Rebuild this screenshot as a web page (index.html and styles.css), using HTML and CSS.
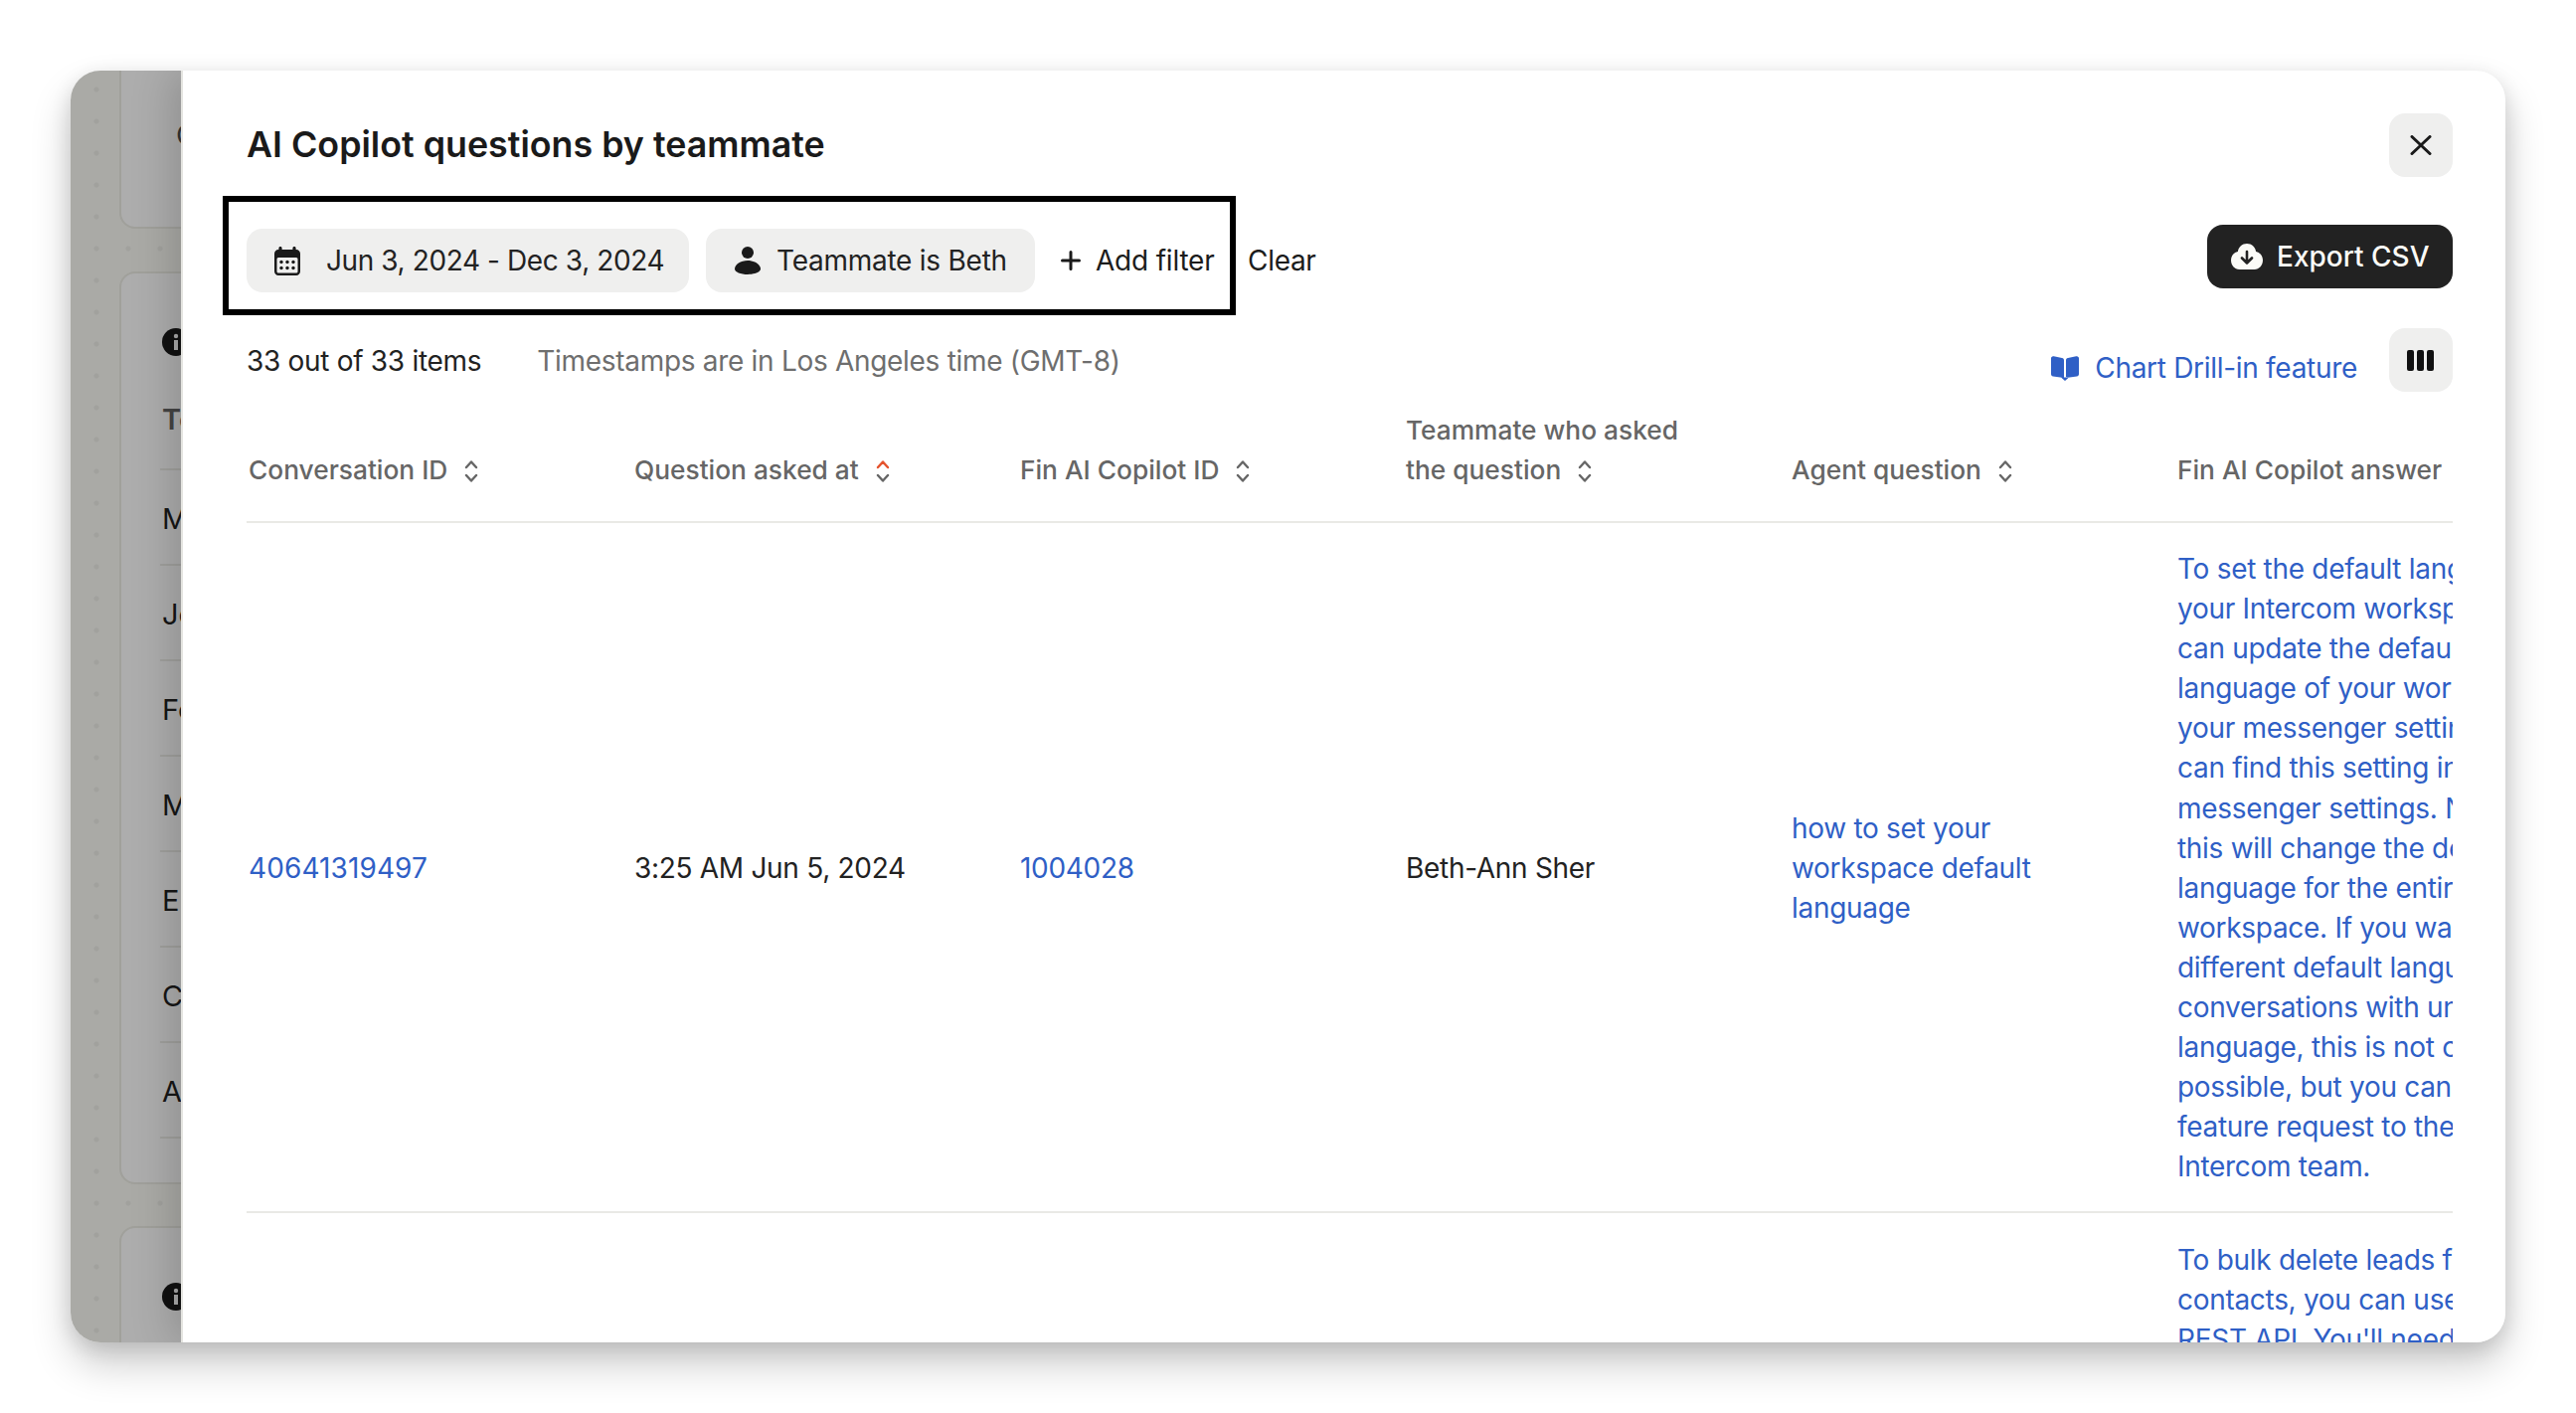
FILE: index.html
```html
<!DOCTYPE html>
<html lang="en">
<head>
<meta charset="utf-8">
<title>AI Copilot questions by teammate</title>
<link rel="stylesheet" href="styles.css">
</head>
<body>
<div class="window">
  <div class="backdrop">
    <div class="card card-top"><span class="card-cut">C</span></div>
    <div class="card card-main">
      <svg class="info" viewBox="0 0 28 28"><circle cx="14" cy="14" r="14" fill="#111"/><circle cx="14" cy="8" r="2.2" fill="#aaa"/><rect x="12" y="12" width="4" height="10" fill="#aaa"/></svg>
      <div class="card-row card-head">To</div>
      <div class="card-row">Mo</div>
      <div class="card-row">Je</div>
      <div class="card-row">Fo</div>
      <div class="card-row">Mi</div>
      <div class="card-row">Er</div>
      <div class="card-row">Ca</div>
      <div class="card-row">Al</div>
    </div>
    <div class="card card-bottom">
      <svg class="info" viewBox="0 0 28 28"><circle cx="14" cy="14" r="14" fill="#111"/><circle cx="14" cy="8" r="2.2" fill="#aaa"/><rect x="12" y="12" width="4" height="10" fill="#aaa"/></svg>
    </div>
  </div>

  <div class="modal">
    <header class="modal-head">
      <h1 class="title">AI Copilot questions by teammate</h1>
      <button class="icon-btn" aria-label="Close">
        <svg class="close-icon" viewBox="0 0 22 20"><path d="M2 1.500 20 18.500M20 1.500 2 18.500" fill="none" stroke="#1a1a1a" stroke-width="3" stroke-linecap="round"/></svg>
      </button>
    </header>

    <div class="toolbar">
      <div class="filter-box">
        <div class="chip chip-date">
          <svg class="cal-icon" viewBox="0 0 26 29"><path fill="#1a1a1a" fill-rule="evenodd" d="M6 0c1 0 1.600.7 1.600 1.600V3h10.800V1.600C18.400.7 19 0 20 0s1.600.7 1.600 1.600V3H22c2.200 0 4 1.800 4 4v18c0 2.200-1.800 4-4 4H4c-2.200 0-4-1.800-4-4V7c0-2.200 1.800-4 4-4h.4V1.600C4.400.7 5 0 6 0ZM4 11a1.500 1.500 0 0 0-1.500 1.500V25A1.500 1.500 0 0 0 4 26.500h18a1.500 1.500 0 0 0 1.500-1.500V12.500A1.500 1.500 0 0 0 22 11H4Z"/><g fill="#1a1a1a"><circle cx="7" cy="15.500" r="1.700"/><circle cx="13" cy="15.500" r="1.700"/><circle cx="19" cy="15.500" r="1.700"/><circle cx="7" cy="21.500" r="1.700"/><circle cx="13" cy="21.500" r="1.700"/><circle cx="19" cy="21.500" r="1.700"/></g></svg>
          <span>Jun 3, 2024 - Dec 3, 2024</span>
        </div>
        <div class="chip chip-person">
          <svg class="person-icon" viewBox="0 0 26 28"><circle cx="13" cy="6" r="6" fill="#1a1a1a"/><path fill="#1a1a1a" d="M13 14c7 0 13 4 13 8.500 0 3-6 5.500-13 5.500S0 25.500 0 22.500C0 18 6 14 13 14Z"/></svg>
          <span>Teammate is Beth</span>
        </div>
        <div class="add-filter">
          <svg class="plus-icon" viewBox="0 0 20 20"><path d="M10 1.500v17M1.500 10h17" fill="none" stroke="#1a1a1a" stroke-width="3" stroke-linecap="round"/></svg>
          <span>Add filter</span>
        </div>
      </div>
      <span class="clear">Clear</span>
      <button class="export">
        <svg class="cloud-icon" viewBox="0 0 32 26"><path fill="#fbfbf7" d="M16 0c4.700 0 8.500 3.500 9.100 8C29 8.900 32 12.300 32 16.500 32 21.700 28.500 26 23.500 26h-15C3.500 26 0 21.700 0 16.500 0 12.300 3 8.900 6.900 8 7.500 3.500 11.300 0 16 0Z"/><path d="M16 8v11M11 14.500l5 5 5-5" fill="none" stroke="#222" stroke-width="2.600" stroke-linecap="round" stroke-linejoin="round"/></svg>
        <span>Export CSV</span>
      </button>
    </div>

    <div class="meta">
      <span class="count">33 out of 33 items</span>
      <span class="zone">Timestamps are in Los Angeles time (GMT-8)</span>
      <a class="doc-link">
        <svg class="book-icon" viewBox="0 0 28 25"><path fill="#2f5fc6" d="M0 2.500C0 1 1.200 0 2.700 .3L11 2c1.300.3 2 1.200 2 2.500V22L2 20.500C.8 20.300 0 19.400 0 18.200ZM28 2.500C28 1 26.800 0 25.300 .3L17 2c-1.300.3-2 1.200-2 2.500V22l11-1.500c1.200-.2 2-1.100 2-2.300ZM10 21.500l8 0-4 3.500Z"/></svg>
        <span>Chart Drill-in feature</span>
      </a>
      <button class="icon-btn columns-btn" aria-label="Columns">
        <svg class="cols-icon" viewBox="0 0 27 21"><g fill="#111"><rect width="7" height="21" rx="2"/><rect x="10" width="7" height="21" rx="2"/><rect x="20" width="7" height="21" rx="2"/></g></svg>
      </button>
    </div>

    <div class="table-wrap">
      <table class="data">
        <thead>
          <tr>
            <th><span class="th-in">Conversation ID <svg class="sort" viewBox="0 0 16 22"><path d="M3 7 8 1.500 13 7M3 15l5 5.500 5-5.500"/></svg></span></th>
            <th><span class="th-in">Question asked at <svg class="sort" viewBox="0 0 16 22"><path class="asc" d="M3 7 8 1.500 13 7"/><path d="M3 15l5 5.500 5-5.500"/></svg></span></th>
            <th><span class="th-in">Fin AI Copilot ID <svg class="sort" viewBox="0 0 16 22"><path d="M3 7 8 1.500 13 7M3 15l5 5.500 5-5.500"/></svg></span></th>
            <th><span class="th-in">Teammate who asked<br>the question <svg class="sort" viewBox="0 0 16 22"><path d="M3 7 8 1.500 13 7M3 15l5 5.500 5-5.500"/></svg></span></th>
            <th><span class="th-in">Agent question <svg class="sort" viewBox="0 0 16 22"><path d="M3 7 8 1.500 13 7M3 15l5 5.500 5-5.500"/></svg></span></th>
            <th><span class="th-in">Fin AI Copilot answer</span></th>
          </tr>
        </thead>
        <tbody>
          <tr>
            <td class="link conv-id">40641319497</td>
            <td>3:25 AM Jun 5, 2024</td>
            <td class="link">1004028</td>
            <td>Beth-Ann Sher</td>
            <td class="link">how to set your<br>workspace default<br>language</td>
            <td class="link answer">To set the default language for<br>your Intercom workspace, you<br>can update the default<br>language of your workspace in<br>your messenger settings. You<br>can find this setting in<br>messenger settings. Note that<br>this will change the default<br>language for the entire<br>workspace. If you want a<br>different default language for<br>conversations with unknown<br>language, this is not currently<br>possible, but you can submit a<br>feature request to the<br>Intercom team.</td>
          </tr>
          <tr>
            <td></td><td></td><td></td><td></td><td></td>
            <td class="link answer">To bulk delete leads from your<br>contacts, you can use the<br>REST API. You'll need to</td>
          </tr>
        </tbody>
      </table>
    </div>
  </div>
</div>
</body>
</html>
```

FILE: styles.css
```css
* { box-sizing: border-box; }

html, body { margin: 0; background: #fff; }

body {
  padding: 71px 71px 71px;
  font-family: Inter, "Liberation Sans", sans-serif;
  color: #222;
}

.window {
  width: 2449px;
  height: 1279px;
  display: flex;
  border-radius: 30px;
  overflow: hidden;
  background: #fff;
  box-shadow: 0 22px 40px rgba(0, 0, 0, .2), 0 6px 20px rgba(0, 0, 0, .12);
}

/* dimmed page behind the modal */
.backdrop {
  width: 111px;
  flex: none;
  overflow: hidden;
  padding-left: 49px;
  background-color: #aaaaa6;
  background-image: radial-gradient(circle, #a1a19d 2px, transparent 3px);
  background-size: 32px 32px;
  background-position: 10px 3px;
  color: #161616;
}

.card {
  width: 300px;
  background: #adadad;
  border: 2px solid #a0a09b;
  border-radius: 16px;
  padding-left: 39px;
}

.card-top {
  height: 179px;
  margin-top: -20px;
  padding-top: 67px;
  font-size: 29px;
  line-height: 32px;
  color: #333;
}

.card-cut { margin-left: 16px; }

.card-main {
  height: 918px;
  margin-top: 43px;
  padding-top: 55px;
}

.card-bottom {
  height: 300px;
  margin-top: 42px;
  padding-top: 55px;
}

.info {
  width: 28px;
  height: 28px;
  display: block;
  margin-left: 2px;
}

.card-row {
  height: 96px;
  border-bottom: 2px solid #a0a09d;
  display: flex;
  align-items: center;
  padding: 3px 0 0 2px;
  font-size: 29px;
}

.card-row:first-of-type { margin-top: 19px; }

.card-head {
  color: #444;
  font-weight: 600;
  padding-bottom: 8px;
}

/* modal */
.modal {
  flex: 1;
  min-width: 0;
  background: #fff;
  border-left: 2px solid #e4e4e0;
  padding: 43px 53px 0 64px;
  box-shadow: -8px 0 40px rgba(0, 0, 0, .18);
  position: relative;
  overflow: hidden;
}

.modal-head {
  display: flex;
  justify-content: space-between;
  align-items: center;
  height: 64px;
}

.title {
  margin: 0 0 2px;
  font-size: 35.800px;
  font-weight: 600;
  line-height: 48px;
  color: #1a1a1a;
}

.icon-btn {
  width: 64px;
  height: 64px;
  border: 0;
  padding: 0;
  border-radius: 16px;
  background: #efefee;
  display: flex;
  align-items: center;
  justify-content: center;
}

.close-icon { width: 22px; height: 20px; }

.toolbar {
  display: flex;
  align-items: flex-start;
  margin-top: 19px;
}

.filter-box {
  display: flex;
  align-items: center;
  width: 1019px;
  height: 120px;
  margin-left: -24px;
  border: 6px solid #000;
  padding: 27px 0 17px 18px;
}

.chip {
  height: 64px;
  border-radius: 16px;
  background: #efefee;
  display: flex;
  align-items: center;
  font-size: 28px;
  letter-spacing: -.3px;
  color: #222;
}

.chip-date { width: 445px; padding-left: 28px; letter-spacing: -.4px; }
.chip-date span { margin-left: 26px; }
.chip-person { width: 331px; margin-left: 17px; padding-left: 29px; letter-spacing: -.25px; }
.chip-person span { margin-left: 16px; }

.cal-icon { width: 26px; height: 29px; flex: none; }
.person-icon { width: 26px; height: 28px; flex: none; }

.add-filter {
  display: flex;
  align-items: center;
  margin-left: 26px;
  font-size: 28px;
  letter-spacing: -.2px;
  color: #1c1c1c;
}

.plus-icon { width: 20px; height: 20px; margin-right: 15px; }

.clear {
  margin: 45px 0 0 12px;
  font-size: 28px;
  letter-spacing: -.3px;
  line-height: 40px;
  color: #1c1c1c;
}

.export {
  margin: 29px 0 0 auto;
  width: 247px;
  height: 64px;
  border: 0;
  border-radius: 16px;
  background: #222;
  color: #fbfbf7;
  font-family: inherit;
  font-size: 28px;
  font-weight: 500;
  display: flex;
  align-items: center;
  padding: 0 0 0 24px;
}

.cloud-icon { width: 32px; height: 26px; margin-right: 14px; flex: none; }

.meta {
  display: flex;
  align-items: flex-start;
  height: 64px;
  margin-top: 13px;
  font-size: 28px;
  letter-spacing: -.3px;
  line-height: 40px;
}

.count { margin-top: 13px; color: #222; }
.zone { margin: 13px 0 0 56px; color: #6e6e6e; }

.doc-link {
  margin: 20px 32px 0 auto;
  display: flex;
  align-items: center;
  color: #2f5fc6;
}

.book-icon { width: 28px; height: 25px; margin-right: 16px; }
.cols-icon { width: 27px; height: 21px; margin-right: 2px; }

.table-wrap { overflow: hidden; }

.data {
  table-layout: fixed;
  width: 2328px;
  border-collapse: collapse;
}

.data th {
  width: 388px;
  padding: 19px 0 31px 2px;
  border-bottom: 2px solid #e9e9e5;
  vertical-align: bottom;
  text-align: left;
  font-size: 26.300px;
  font-weight: 500;
  line-height: 40px;
  color: #666;
}

.th-in { display: inline-block; }

.sort {
  width: 16px;
  height: 22px;
  margin-left: 9px;
  vertical-align: -3px;
}

.sort path {
  fill: none;
  stroke: #666;
  stroke-width: 2.400;
  stroke-linecap: round;
  stroke-linejoin: round;
}

.sort path.asc { stroke: #e5532d; }

.data td {
  padding: 26px 0 24px 2px;
  border-bottom: 2px solid #e9e9e5;
  font-size: 28px;
  letter-spacing: -.3px;
  line-height: 40.100px;
  color: #222;
  vertical-align: middle;
  white-space: nowrap;
  overflow: hidden;
}

.data td.link { color: #2f5fc6; }
.data td.conv-id { letter-spacing: .1px; }

.data tbody tr + tr td { padding-top: 27px; }
```
